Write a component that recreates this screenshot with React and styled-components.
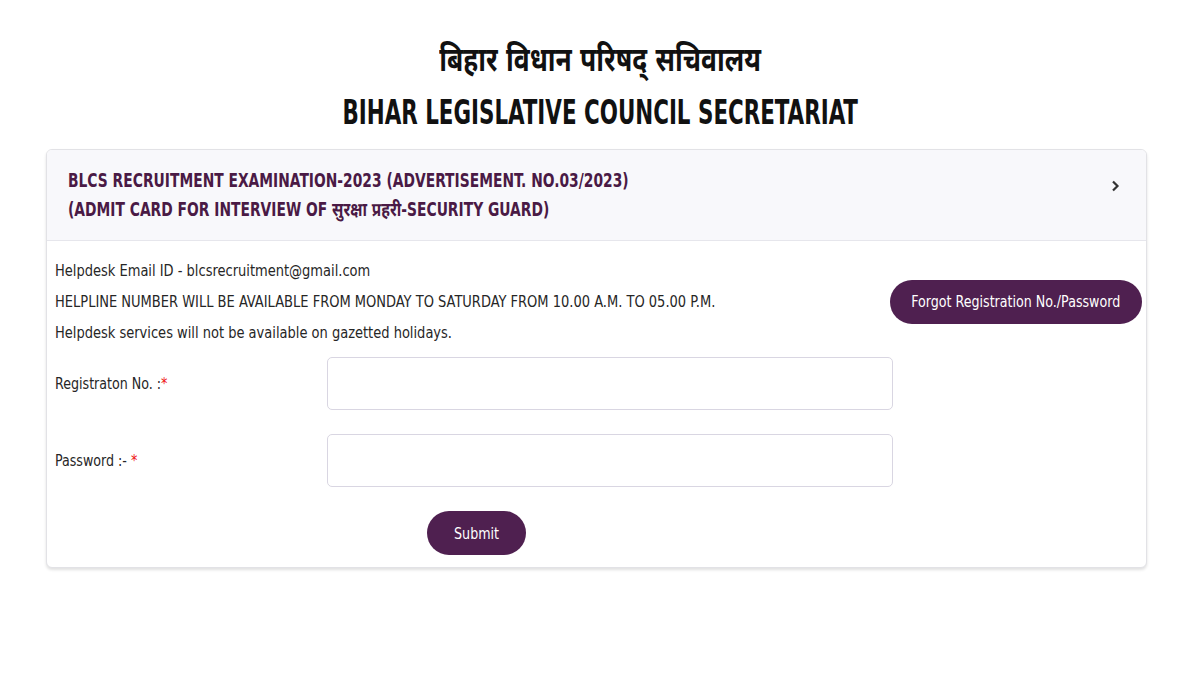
import styled, { createGlobalStyle } from "styled-components";

const Global = createGlobalStyle`
  body {
    margin: 0;
    background: #ffffff;
    font-family: "DejaVu Sans Condensed", "Noto Sans Devanagari", "Noto Sans", sans-serif;
    color: #262626;
  }
`;

const Page = styled.div`
  width: 1200px;
  height: 675px;
  padding-top: 33px;
  box-sizing: border-box;
`;

const Heading = styled.div`
  text-align: center;
  color: #111;
`;

const Title = styled.h1`
  margin: 0;
  font-size: ${(p) => p.$size};
  line-height: 53px;
  font-weight: bold;
`;

// the reference face is a narrow one, so the installed condensed face is pressed a bit more
const Narrow = styled.span`
  display: inline-block;
  white-space: nowrap;
  transform: scaleX(${(p) => p.$x});
  transform-origin: ${(p) => p.$origin || "center"};
`;

const Card = styled.div`
  box-sizing: border-box;
  margin: 10px 0 0 46px;
  width: 1101px;
  border: 1px solid #e2e2e6;
  border-radius: 6px;
  box-shadow: 0 2px 3px rgba(0, 0, 0, 0.12);
  background: #fff;
  overflow: hidden;
`;

const CardHeader = styled.div`
  display: flex;
  justify-content: space-between;
  height: 90px;
  padding: 0 26px 0 21px;
  background: #f8f8fb;
  border-bottom: 1px solid #e6e6ec;
`;

const HeaderText = styled.div`
  align-self: center;
  color: #4a1a45;
  font-weight: bold;
  font-size: 19px;
  line-height: 29px;
`;

const Chevron = styled.svg`
  margin-top: 30px;
  width: 10px;
  height: 12px;
`;

const CardBody = styled.div`
  padding: 14px 4px 12px 8px;
`;

const InfoRow = styled.div`
  display: flex;
  justify-content: space-between;
  align-items: center;
`;

const InfoLines = styled.div`
  font-size: 16px;
  color: #262626;
`;

const InfoLine = styled.p`
  margin: 0;
  line-height: 31px;
`;

const PillButton = styled.button`
  display: flex;
  align-items: center;
  justify-content: center;
  width: ${(p) => p.$w};
  height: 44px;
  padding: 0;
  background: #4f2050;
  color: #fff;
  border: none;
  border-radius: 22px;
  font-family: inherit;
  font-size: 16px;
  cursor: pointer;
`;

const FieldRow = styled.div`
  display: flex;
  align-items: center;
  margin-top: ${(p) => p.$top};
`;

const Label = styled.label`
  width: 272px;
  font-size: 16px;
  color: #262626;
`;

const Star = styled.span`
  color: #e11;
`;

const Input = styled.input`
  width: 566px;
  height: 53px;
  box-sizing: border-box;
  border: 1px solid #d9d6e2;
  border-radius: 5px;
  outline: none;
`;

const SubmitWrap = styled.div`
  margin: 24px 0 0 372px;
`;

const infoLines = [
  "Helpdesk Email ID - blcsrecruitment@gmail.com",
  "HELPLINE NUMBER WILL BE AVAILABLE FROM MONDAY TO SATURDAY FROM 10.00 A.M. TO 05.00 P.M.",
  "Helpdesk services will not be available on gazetted holidays.",
];

export default function App() {
  return (
    <Page>
      <Global />
      <Heading>
        <Title $size="33px">
          <Narrow $x={0.8}>बिहार विधान परिषद् सचिवालय</Narrow>
        </Title>
        <Title $size="34px">
          <Narrow $x={0.7}>BIHAR LEGISLATIVE COUNCIL SECRETARIAT</Narrow>
        </Title>
      </Heading>
      <Card>
        <CardHeader>
          <HeaderText>
            <Narrow $x={0.81} $origin="left">
              BLCS RECRUITMENT EXAMINATION-2023 (ADVERTISEMENT. NO.03/2023)
              <br />
              (ADMIT CARD FOR INTERVIEW OF सुरक्षा प्रहरी-SECURITY GUARD)
            </Narrow>
          </HeaderText>
          <Chevron viewBox="0 0 10 12">
            <path d="M3 1.5 L7.5 6 L3 10.5" fill="none" stroke="#333" strokeWidth="2.2" />
          </Chevron>
        </CardHeader>
        <CardBody>
          <InfoRow>
            <InfoLines>
              {infoLines.map((line) => (
                <InfoLine key={line}>
                  <Narrow $x={0.905} $origin="left">{line}</Narrow>
                </InfoLine>
              ))}
            </InfoLines>
            <PillButton $w="252px">
              <Narrow $x={0.88}>Forgot Registration No./Password</Narrow>
            </PillButton>
          </InfoRow>
          <FieldRow $top="9px">
            <Label>
              <Narrow $x={0.88} $origin="left">
                Registraton No. :<Star>*</Star>
              </Narrow>
            </Label>
            <Input type="text" />
          </FieldRow>
          <FieldRow $top="24px">
            <Label>
              <Narrow $x={0.88} $origin="left">
                Password :- <Star>*</Star>
              </Narrow>
            </Label>
            <Input type="password" />
          </FieldRow>
          <SubmitWrap>
            <PillButton $w="99px">
              <Narrow $x={0.88}>Submit</Narrow>
            </PillButton>
          </SubmitWrap>
        </CardBody>
      </Card>
    </Page>
  );
}
